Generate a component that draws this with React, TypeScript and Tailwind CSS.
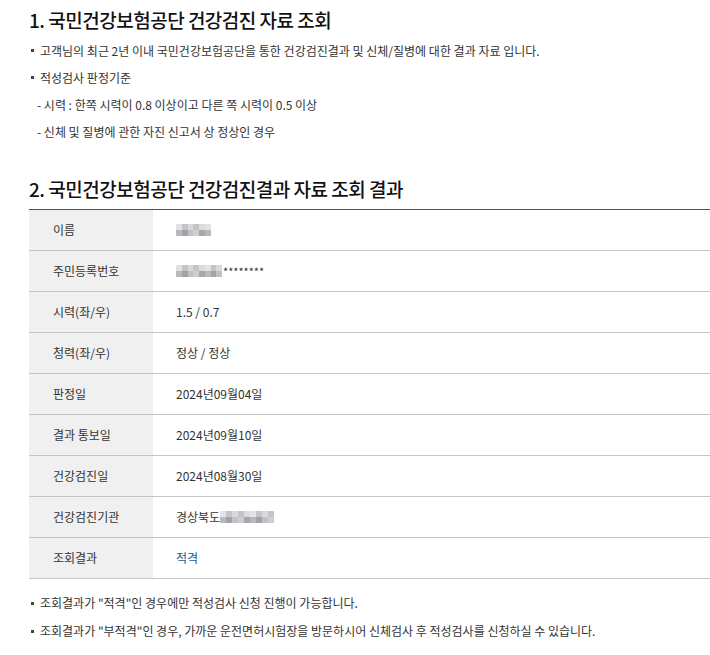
const FONT = { fontFamily: '"Noto Sans CJK KR", "Noto Sans", sans-serif' };

type Row = { label: string; value: React.ReactNode };

function Blur({ w }: { w: number }) {
  // blurred personal data, drawn as two rows of soft gray cells
  const cells = Math.round(w / 6);
  const top = ["#e4e2e4", "#c9c3c7", "#d6dade", "#c4c4c6", "#dcdcde"];
  const bottom = ["#d0cdd0", "#a9a6a9", "#b6b9bd", "#a3a3a5", "#c2c2c4"];
  return (
    <span className="inline-flex h-[12px] flex-col align-middle" style={{ width: w }}>
      {[top, bottom].map((pal, r) => (
        <span key={r} className="flex flex-1">
          {Array.from({ length: cells }).map((_, i) => (
            <span key={i} className="flex-1" style={{ background: pal[(i + r * 2) % 5] }} />
          ))}
        </span>
      ))}
    </span>
  );
}

const ROWS: Row[] = [
  { label: "이름", value: <Blur w={35} /> },
  {
    label: "주민등록번호",
    value: (
      <span className="inline-flex items-center">
        <Blur w={46} />
        <span className="ml-[1px] text-[11px]">********</span>
      </span>
    ),
  },
  { label: "시력(좌/우)", value: "1.5 / 0.7" },
  { label: "청력(좌/우)", value: "정상 / 정상" },
  { label: "판정일", value: "2024년09월04일" },
  { label: "결과 통보일", value: "2024년09월10일" },
  { label: "건강검진일", value: "2024년08월30일" },
  {
    label: "건강검진기관",
    value: (
      <span className="inline-flex items-center">
        경상북도
        <Blur w={54} />
      </span>
    ),
  },
  { label: "조회결과", value: <span className="text-[#1c5a9c]">적격</span> },
];

function Bullet({ children }: { children: React.ReactNode }) {
  return (
    <li className="flex items-center">
      <span className="mr-[6px] ml-[2px] inline-block h-[3px] w-[3px] bg-[#444]" />
      {children}
    </li>
  );
}

export default function App() {
  return (
    <div className="min-h-screen bg-white pl-[29px] pt-[6px] text-[#333]" style={FONT}>
      <h2 className="text-[19px] leading-[28px] font-medium tracking-[-0.5px] text-[#111]">
        1. 국민건강보험공단 건강검진 자료 조회
      </h2>
      <ul className="mt-[3px] text-[12px] leading-[27px]">
        <Bullet>고객님의 최근 2년 이내 국민건강보험공단을 통한 건강검진결과 및 신체/질병에 대한 결과 자료 입니다.</Bullet>
        <Bullet>적성검사 판정기준</Bullet>
        <li className="pl-[8px]">- 시력 : 한쪽 시력이 0.8 이상이고 다른 쪽 시력이 0.5 이상</li>
        <li className="pl-[8px]">- 신체 및 질병에 관한 자진 신고서 상 정상인 경우</li>
      </ul>

      <h2 className="mt-[30px] text-[19px] leading-[28px] font-medium tracking-[-0.5px] text-[#111]">
        2. 국민건강보험공단 건강검진결과 자료 조회 결과
      </h2>
      <div className="mt-[6px] border-t border-[#2d5b88] text-[12px]">
        {ROWS.map((row) => (
          <div key={row.label} className="flex h-[41px] border-b border-[#c4c4c4]">
            <div className="flex w-[124px] shrink-0 items-center bg-[#f0f0f0] pl-[24px] text-[#333]">{row.label}</div>
            <div className="flex items-center pl-[23px]">{row.value}</div>
          </div>
        ))}
      </div>

      <ul className="mt-[10px] text-[12px] leading-[28px]">
        <Bullet>조회결과가 "적격"인 경우에만 적성검사 신청 진행이 가능합니다.</Bullet>
        <Bullet>조회결과가 "부적격"인 경우, 가까운 운전면허시험장을 방문하시어 신체검사 후 적성검사를 신청하실 수 있습니다.</Bullet>
      </ul>
    </div>
  );
}
